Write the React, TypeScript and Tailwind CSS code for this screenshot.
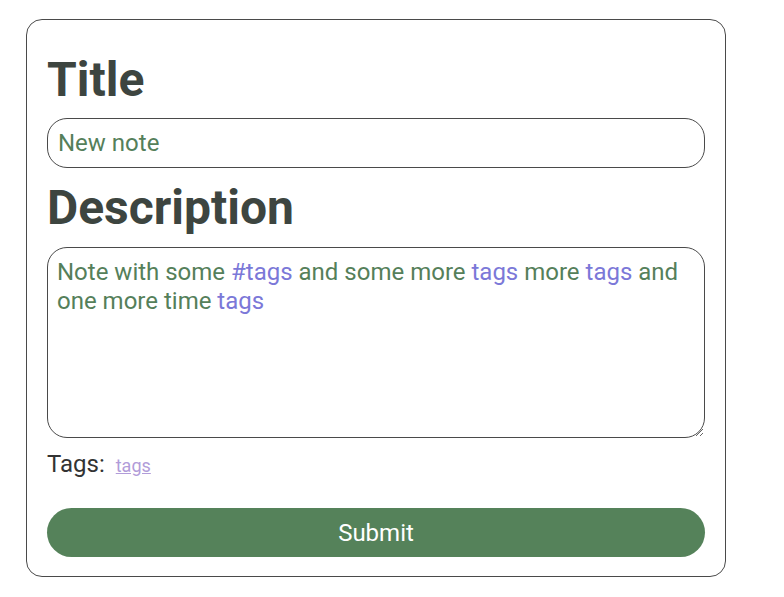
import React, { useState } from 'react';

const DESCRIPTION = [
  { text: 'Note with some ', tag: false },
  { text: '#tags', tag: true },
  { text: ' and some more ', tag: false },
  { text: 'tags', tag: true },
  { text: ' more ', tag: false },
  { text: 'tags', tag: true },
  { text: ' and one more time ', tag: false },
  { text: 'tags', tag: true },
];

export default function App() {
  const [title, setTitle] = useState('New note');

  return (
    <div className="pt-[19px] pl-[26px] font-['Roboto',sans-serif]">
      <form
        className="w-[700px] border border-[#4a4a4a] rounded-[16px] px-[20px] pt-[32px] pb-[19px] flex flex-col"
        onSubmit={e => e.preventDefault()}
      >
        <h1 className="text-[48px] leading-[56px] font-bold text-[#3d4540]">Title</h1>
        <input
          value={title}
          onChange={e => setTitle(e.target.value)}
          className="mt-[10px] h-[50px] w-full border border-[#4a4a4a] rounded-[20px] px-[10px] text-[24px] text-[#557f5a] outline-none"
        />
        <h2 className="mt-[12px] text-[48px] leading-[56px] font-bold text-[#3d4540]">Description</h2>
        {/* description with highlighted tags */}
        <div className="mt-[11px] h-[191px] w-full border border-[#4a4a4a] rounded-[20px] px-[9px] pt-[10px] text-[24px] leading-[29px] text-[#557f5a] resize-y overflow-auto">
          {DESCRIPTION.map((part, i) => (
            <span key={i} className={part.tag ? 'text-[#7b78d8]' : ''}>
              {part.text}
            </span>
          ))}
        </div>
        <div className="mt-[8px] flex items-baseline gap-[11px]">
          <span className="text-[24px] text-[#333]">Tags:</span>
          <a href="#" className="text-[18px] text-[#b19cd9] underline">tags</a>
        </div>
        <button
          type="submit"
          className="mt-[26px] h-[49px] w-full rounded-full bg-[#55825a] text-[24px] text-white"
        >
          Submit
        </button>
      </form>
    </div>
  );
}
